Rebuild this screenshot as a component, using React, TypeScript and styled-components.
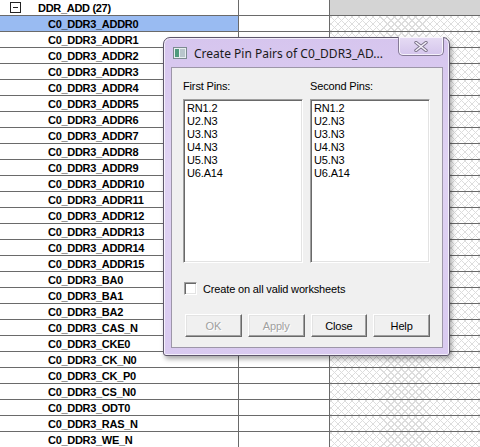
import React from "react";
import styled, { createGlobalStyle } from "styled-components";

const Global = createGlobalStyle`
  html, body { margin: 0; padding: 0; background: #fff; }
  body { width: 480px; height: 447px; overflow: hidden; }
`;

const Page = styled.div`
  position: relative;
  width: 480px;
  height: 447px;
  overflow: hidden;
  font-family: "Liberation Sans", Arial, sans-serif;
`;

const Row = styled.div`
  display: flex;
  height: 16px;
  box-sizing: border-box;
  border-bottom: 1px solid #6a6a6a;
`;

const NameCell = styled.div<{ $selected?: boolean; $group?: boolean }>`
  width: 239px;
  box-sizing: border-box;
  border-right: 1px solid #6a6a6a;
  background: ${(p) => (p.$selected ? "#99bbf2" : "#fff")};
  display: flex;
  align-items: center;
  padding-left: ${(p) => (p.$group ? "10px" : "48px")};
  font-weight: bold;
  font-size: 11px;
  letter-spacing: -0.3px;
  color: #000;
  white-space: nowrap;
`;

const MidCell = styled.div`
  width: 91px;
  box-sizing: border-box;
  border-right: 1px solid #6a6a6a;
  background: #fff;
`;

const HatchCell = styled.div<{ $head?: boolean }>`
  flex: 1;
  background-color: ${(p) => (p.$head ? "#d4d4d4" : "#fff")};
  background-image: ${(p) =>
    p.$head
      ? "none"
      : "repeating-linear-gradient(45deg, #dddddd 0 1px, transparent 1px 5px), repeating-linear-gradient(-45deg, #dddddd 0 1px, transparent 1px 5px)"};
`;

const ExpandBox = styled.span`
  width: 9px;
  height: 9px;
  border: 1px solid #222;
  margin-right: 17px;
  position: relative;
  flex: none;
  &::after {
    content: "";
    position: absolute;
    left: 2px;
    right: 2px;
    top: 4px;
    height: 1px;
    background: #222;
  }
`;

const Window = styled.div`
  position: absolute;
  left: 163px;
  top: 37px;
  width: 287px;
  height: 319px;
  box-sizing: border-box;
  border: 1px solid #5d566a;
  border-radius: 7px 7px 3px 3px;
  background: linear-gradient(180deg, #d6c5ee 0%, #e0d3f3 40%, #d9caf0 100%);
  box-shadow: inset 0 0 0 1px rgba(255, 255, 255, 0.7), 2px 3px 5px rgba(0, 0, 0, 0.35);
  display: flex;
  flex-direction: column;
  font-family: "Liberation Sans", Tahoma, sans-serif;
`;

const TitleBar = styled.div`
  height: 29px;
  display: flex;
  align-items: center;
  padding-left: 9px;
  position: relative;
`;

const TitleText = styled.span`
  font-family: "Noto Sans", "Open Sans", sans-serif;
  font-size: 12px;
  color: #1a1a1a;
  margin-left: 7px;
  margin-top: 1px;
  white-space: nowrap;
`;

const CloseBtn = styled.div`
  position: absolute;
  right: 5px;
  top: -1px;
  width: 46px;
  height: 19px;
  box-sizing: border-box;
  border: 1px solid #857b96;
  border-top: none;
  border-radius: 0 0 5px 5px;
  background: linear-gradient(180deg, #e6dcf4, #d4c5ec);
  box-shadow: inset 0 0 0 1px rgba(255, 255, 255, 0.75);
  display: flex;
  align-items: center;
  justify-content: center;
`;

const Client = styled.div`
  flex: 1;
  margin: 0 6px 7px 7px;
  background: #f0f0f0;
  border: 1px solid #9d96a8;
  padding: 12px 12px 0 11px;
  display: flex;
  flex-direction: column;
  font-size: 11px;
  letter-spacing: -0.15px;
  color: #000;
`;

const Lists = styled.div`
  display: flex;
  gap: 7px;
`;

const ListCol = styled.div`
  display: flex;
  flex-direction: column;
`;

const Label = styled.div`
  height: 13px;
  line-height: 13px;
  margin-bottom: 6px;
  color: #000;
`;

const ListBox = styled.div`
  width: 120px;
  height: 164px;
  box-sizing: border-box;
  background: #fff;
  border-top: 1px solid #a0a0a0;
  border-left: 1px solid #a0a0a0;
  border-right: 1px solid #fff;
  border-bottom: 1px solid #fff;
  box-shadow: inset 1px 1px 0 #696969, inset -1px -1px 0 #e3e3e3;
  padding: 2px 3px;
`;

const Item = styled.div`
  height: 13px;
  line-height: 13px;
  font-size: 11px;
  white-space: nowrap;
`;

const CheckRow = styled.label`
  display: flex;
  align-items: center;
  margin-top: 19px;
  height: 13px;
`;

const CheckBox = styled.span`
  width: 13px;
  height: 13px;
  box-sizing: border-box;
  background: #fff;
  border-top: 1px solid #a0a0a0;
  border-left: 1px solid #a0a0a0;
  border-right: 1px solid #fff;
  border-bottom: 1px solid #fff;
  box-shadow: inset 1px 1px 0 #696969, inset -1px -1px 0 #e3e3e3;
  margin-right: 6px;
  margin-left: 1px;
`;

const Buttons = styled.div`
  display: flex;
  gap: 6px;
  margin-top: 19px;
  padding-left: 2px;
`;

const Button = styled.div<{ $disabled?: boolean }>`
  width: 57px;
  height: 23px;
  box-sizing: border-box;
  background: #f0f0f0;
  border-top: 1px solid #fff;
  border-left: 1px solid #fff;
  border-right: 1px solid #696969;
  border-bottom: 1px solid #696969;
  box-shadow: inset -1px -1px 0 #a0a0a0, inset 1px 1px 0 #e3e3e3;
  display: flex;
  align-items: center;
  justify-content: center;
  font-size: 11px;
  color: ${(p) => (p.$disabled ? "#a0a0a0" : "#000")};
  text-shadow: ${(p) => (p.$disabled ? "1px 1px 0 #fff" : "none")};
`;

const names = [
  "C0_DDR3_ADDR0",
  "C0_DDR3_ADDR1",
  "C0_DDR3_ADDR2",
  "C0_DDR3_ADDR3",
  "C0_DDR3_ADDR4",
  "C0_DDR3_ADDR5",
  "C0_DDR3_ADDR6",
  "C0_DDR3_ADDR7",
  "C0_DDR3_ADDR8",
  "C0_DDR3_ADDR9",
  "C0_DDR3_ADDR10",
  "C0_DDR3_ADDR11",
  "C0_DDR3_ADDR12",
  "C0_DDR3_ADDR13",
  "C0_DDR3_ADDR14",
  "C0_DDR3_ADDR15",
  "C0_DDR3_BA0",
  "C0_DDR3_BA1",
  "C0_DDR3_BA2",
  "C0_DDR3_CAS_N",
  "C0_DDR3_CKE0",
  "C0_DDR3_CK_N0",
  "C0_DDR3_CK_P0",
  "C0_DDR3_CS_N0",
  "C0_DDR3_ODT0",
  "C0_DDR3_RAS_N",
  "C0_DDR3_WE_N",
];

const pins = ["RN1.2", "U2.N3", "U3.N3", "U4.N3", "U5.N3", "U6.A14"];

const WinIcon = () => (
  <svg width="14" height="12" viewBox="0 0 14 12">
    <rect x="0.5" y="0.5" width="13" height="11" fill="#e8eef0" stroke="#7c8a90" />
    <rect x="2" y="2" width="4" height="8" fill="#4f9a7c" />
    <rect x="7" y="2" width="5" height="8" fill="#b9c6cc" />
  </svg>
);

const CloseGlyph = () => (
  <svg width="14" height="11" viewBox="0 0 14 11">
    <path d="M2 1.5 L12 9.5 M12 1.5 L2 9.5" stroke="#7a7288" strokeWidth="3.4" strokeLinecap="round" />
    <path d="M2 1.5 L12 9.5 M12 1.5 L2 9.5" stroke="#f6f2fb" strokeWidth="1.6" strokeLinecap="round" />
  </svg>
);

export default function App() {
  return (
    <Page>
      <Global />
      <Row>
        <NameCell $group>
          <ExpandBox />
          DDR_ADD (27)
        </NameCell>
        <MidCell />
        <HatchCell $head />
      </Row>
      {names.map((n, i) => (
        <Row key={n}>
          <NameCell $selected={i === 0}>{n}</NameCell>
          <MidCell />
          <HatchCell />
        </Row>
      ))}
      <Window>
        <TitleBar>
          <WinIcon />
          <TitleText>Create Pin Pairs of C0_DDR3_AD...</TitleText>
          <CloseBtn>
            <CloseGlyph />
          </CloseBtn>
        </TitleBar>
        <Client>
          <Lists>
            <ListCol>
              <Label>First Pins:</Label>
              <ListBox>
                {pins.map((p) => (
                  <Item key={p}>{p}</Item>
                ))}
              </ListBox>
            </ListCol>
            <ListCol>
              <Label>Second Pins:</Label>
              <ListBox>
                {pins.map((p) => (
                  <Item key={p}>{p}</Item>
                ))}
              </ListBox>
            </ListCol>
          </Lists>
          <CheckRow>
            <CheckBox />
            Create on all valid worksheets
          </CheckRow>
          <Buttons>
            <Button $disabled>OK</Button>
            <Button $disabled>Apply</Button>
            <Button>Close</Button>
            <Button>Help</Button>
          </Buttons>
        </Client>
      </Window>
    </Page>
  );
}
